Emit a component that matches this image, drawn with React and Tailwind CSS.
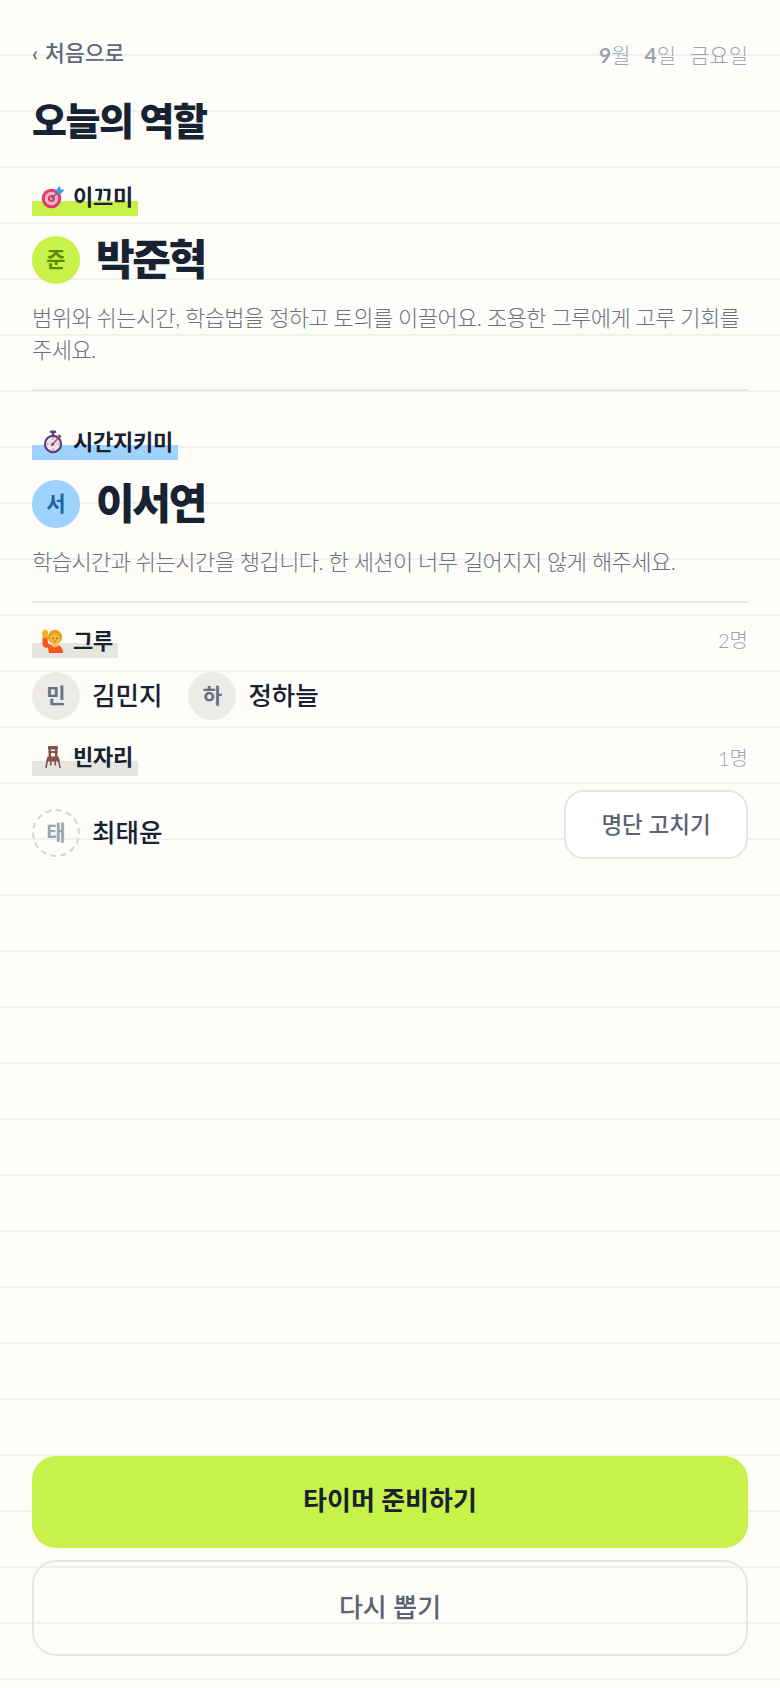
const TEXT = "text-[#172232]";

function TargetIcon() {
  return (
    <svg width="24" height="24" viewBox="0 0 24 24" className="shrink-0">
      <circle cx="10.5" cy="13.5" r="9.8" fill="#e5396f" />
      <circle cx="10.5" cy="13.5" r="6.8" fill="#f4b6cc" />
      <circle cx="10.5" cy="13.5" r="3.6" fill="#e5396f" />
      <circle cx="10.5" cy="13.5" r="1.4" fill="#f4b6cc" />
      <path d="M10.5 13.5 L19 5" stroke="#5a6a80" strokeWidth="1.4" />
      <path d="M14.5 6 L18.5 1 L19.8 4.2 L23.5 5 L18.5 10 L17 7.5 Z" fill="#39a0ee" />
    </svg>
  );
}

function StopwatchIcon() {
  return (
    <svg width="24" height="24" viewBox="0 0 24 24" className="shrink-0">
      <rect x="9" y="0.5" width="6" height="2.6" rx="1" fill="#5b3f78" />
      <rect x="10.8" y="2.5" width="2.4" height="3" fill="#5b3f78" />
      <path d="M17.5 5 L19.8 7.2" stroke="#5b3f78" strokeWidth="2" />
      <circle cx="12" cy="14" r="9.2" fill="#5b3f78" />
      <circle cx="12" cy="14" r="7" fill="#efe3ea" />
      <path d="M11 15 L16.5 9" stroke="#e5396f" strokeWidth="1.8" strokeLinecap="round" />
      <circle cx="11.6" cy="14.4" r="1.4" fill="#5b3f78" />
      <path d="M12 8v1.5M12 18.5v1.5M6 14h1.5M16.5 14H18" stroke="#8a7398" strokeWidth="1" />
    </svg>
  );
}

function RaisedHandIcon() {
  return (
    <svg width="24" height="24" viewBox="0 0 24 24" className="shrink-0">
      <path d="M1.5 8.5 L1.5 15 C2 18 4 19.5 7 18.5 L8 24 H22 C22 19.5 20 16.5 16 16 H10 L7 14.5 L6.5 8 Z" fill="#f8561f" />
      <path d="M1 3.5 L3 0.8 L5.5 0.6 L7 3 L6.8 8.8 L1.8 9.2 Z" fill="#f2b01e" />
      <circle cx="14" cy="8" r="7.2" fill="#ee9f1c" />
      <circle cx="14" cy="9.8" r="4.8" fill="#f7bd3d" />
      <circle cx="12.2" cy="9.4" r="0.8" fill="#7a4a17" />
      <circle cx="15.8" cy="9.4" r="0.8" fill="#7a4a17" />
      <path d="M12.6 12.2h2.8" stroke="#c6541c" strokeWidth="0.9" />
      <path d="M11 15.5h6v2l-3 1-3-1z" fill="#f7bd3d" />
    </svg>
  );
}

function ChairIcon() {
  return (
    <svg width="24" height="24" viewBox="0 0 24 24" className="shrink-0">
      <rect x="7" y="1" width="10" height="3.6" rx="1" fill="#865049" />
      <rect x="7.6" y="3" width="2.4" height="9" fill="#865049" />
      <rect x="14" y="3" width="2.4" height="9" fill="#865049" />
      <rect x="7.6" y="6" width="8.8" height="2" fill="#865049" />
      <path d="M6.5 11.5 H17.5 L19 16.5 H5 Z" fill="#865049" />
      <path d="M6.2 16 L5 23 M17.8 16 L19 23 M10 16 L9.6 20.5 M14 16 L14.4 20.5" stroke="#865049" strokeWidth="1.6" />
    </svg>
  );
}

function RoleChip({ icon, label, className }) {
  return (
    <span className={`flex h-[30px] w-fit items-center gap-2 pl-[9px] pr-[5px] ${className}`}>
      {icon}
      <span className={`text-[22px] font-bold leading-[22px] tracking-[-0.01em] ${TEXT}`}>{label}</span>
    </span>
  );
}

function Avatar({ char, className }) {
  return (
    <span className={`flex h-12 w-12 shrink-0 items-center justify-center rounded-full pb-[2px] text-[21px] font-semibold ${className}`}>
      {char}
    </span>
  );
}

function LeadRole({ icon, label, chipClass, char, avatarClass, name, children }) {
  return (
    <section>
      <RoleChip icon={icon} label={label} className={chipClass} />
      <div className="mt-5 flex items-center gap-4">
        <Avatar char={char} className={avatarClass} />
        <span className={`pb-[2px] text-[42px] font-extrabold leading-[46px] tracking-[-0.055em] ${TEXT}`}>{name}</span>
      </div>
      <p className="mt-[18px] text-[22px] font-light leading-8 tracking-[-0.025em] text-[#6b7280]">{children}</p>
    </section>
  );
}

function Person({ char, name, dashed }) {
  return (
    <div className="flex items-center gap-3">
      <Avatar
        char={char}
        className={dashed ? "border-2 border-dashed border-[#d4d4cf] text-[#9ca3af]" : "bg-[#ecebe6] text-[#667080]"}
      />
      <span className={`pb-[2px] text-[25.5px] font-medium ${TEXT}`}>{name}</span>
    </div>
  );
}

function ChipHeader({ icon, label, count, chipClass }) {
  return (
    <div className="flex items-start justify-between">
      <RoleChip icon={icon} label={label} className={chipClass} />
      <span className="text-[20px] font-light leading-[24px] text-[#9ca3af]">{count}</span>
    </div>
  );
}

export default function App() {
  return (
    <div className="flex min-h-[1688px] flex-col bg-[#fefdfa] bg-[repeating-linear-gradient(to_bottom,transparent_0,transparent_54px,#f1f0ec_54px,#f1f0ec_56px)] px-8 pb-8 font-['Lato','Noto_Sans_CJK_KR',sans-serif]">
      <header className="mt-[39px] flex h-8 items-center justify-between">
        <span className="flex items-center gap-[7px] pb-[3px] text-[21.5px] font-medium text-[#5d6878]">
          <span>‹</span>
          <span>처음으로</span>
        </span>
        <span className="flex gap-[14px] text-[21px] font-light text-[#9ca3af]">
          <span><b className="font-bold">9</b>월</span>
          <span><b className="font-bold">4</b>일</span>
          <span>금요일</span>
        </span>
      </header>

      <h1 className={`mt-[25px] text-[38px] font-extrabold leading-[48px] tracking-[-0.04em] ${TEXT}`}>오늘의 역할</h1>

      <div className="mt-[42px]">
        <LeadRole
          icon={<TargetIcon />}
          label="이끄미"
          chipClass="bg-[linear-gradient(transparent_50%,#c8f24a_50%)] pb-2"
          char="준"
          avatarClass="bg-[#c8f24a] text-[#5c8a00]"
          name="박준혁"
        >
          범위와 쉬는시간, 학습법을 정하고 토의를 이끌어요. 조용한 그루에게 고루 기회를 주세요.
        </LeadRole>
      </div>

      <hr className="mt-[23px] border-0 border-t-2 border-[#e7e6e0]" />

      <div className="mt-[39px]">
        <LeadRole
          icon={<StopwatchIcon />}
          label="시간지키미"
          chipClass="bg-[linear-gradient(transparent_50%,#a0d2ff_50%)] pb-[6px]"
          char="서"
          avatarClass="bg-[#a0d2ff] text-[#1d659f]"
          name="이서연"
        >
          학습시간과 쉬는시간을 챙깁니다. 한 세션이 너무 길어지지 않게 해주세요.
        </LeadRole>
      </div>

      <hr className="mt-[23px] border-0 border-t-2 border-[#e7e6e0]" />

      <div className="mt-[25px]">
        <ChipHeader
          icon={<RaisedHandIcon />}
          label="그루"
          count="2명"
          chipClass="bg-[linear-gradient(transparent_50%,#e6e5df_50%)] pb-1"
        />
        <div className="mt-[14px] flex gap-[26px]">
          <Person char="민" name="김민지" />
          <Person char="하" name="정하늘" />
        </div>
      </div>

      <div className="mt-[26px]">
        <ChipHeader
          icon={<ChairIcon />}
          label="빈자리"
          count="1명"
          chipClass="bg-[linear-gradient(transparent_50%,#e6e5df_50%)] pb-2"
        />
        <div className="mt-[14px] flex items-end justify-between">
          <div className="mb-[2px]">
            <Person char="태" name="최태윤" dashed />
          </div>
          <button className="h-[69px] w-[184px] rounded-[20px] border-2 border-[#e7e6e0] bg-white text-[22.5px] font-medium text-[#5b6472]">
            명단 고치기
          </button>
        </div>
      </div>

      <div className="mt-auto flex flex-col gap-3">
        <button className={`h-[92px] rounded-3xl bg-[#c8f24a] pb-1 text-[26px] font-bold ${TEXT}`}>타이머 준비하기</button>
        <button className="h-24 rounded-3xl border-2 border-[#e7e6e0] pb-[2px] text-[26px] font-medium text-[#5b6472]">다시 뽑기</button>
      </div>
    </div>
  );
}
